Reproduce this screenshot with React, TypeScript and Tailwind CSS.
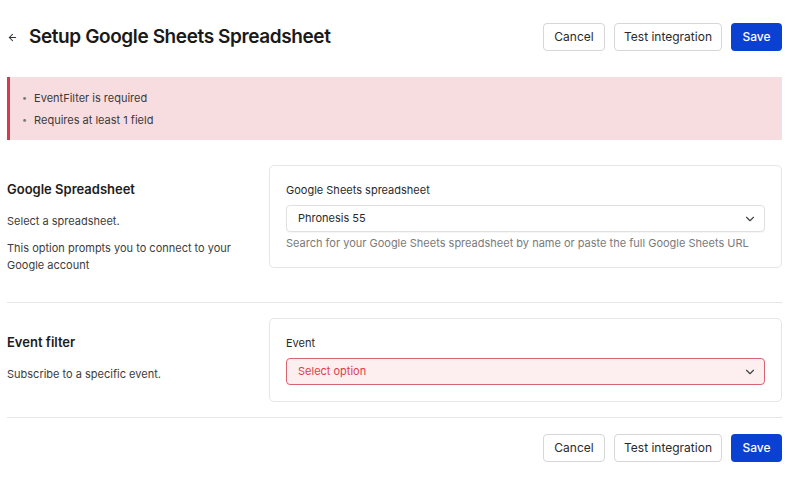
import React from 'react';
import { ArrowLeft, ChevronDown } from 'lucide-react';
import { clsx } from 'clsx';

function Actions() {
  return (
    <div className="flex items-center gap-[9px]">
      <button className="h-[28px] w-[62px] rounded-[4px] border border-[#d6d6d6] bg-white text-[12px] text-[#2a2a2a]">
        Cancel
      </button>
      <button className="h-[28px] w-[108px] rounded-[4px] border border-[#d6d6d6] bg-white text-[12px] text-[#2a2a2a]">
        Test integration
      </button>
      <button className="h-[28px] w-[51px] rounded-[4px] bg-[#0b41d3] text-[12px] font-medium text-white">
        Save
      </button>
    </div>
  );
}

function SelectBox({ value, error }: { value: string; error?: boolean }) {
  return (
    <div
      className={clsx(
        'flex h-[27px] items-center justify-between rounded-[4px] border pl-[11px] pr-[7px] text-[11px]',
        {
          'border-[#e0e0e0] bg-white text-[#2a2a2a] shadow-[0_1px_1px_rgba(0,0,0,0.04)]': !error,
          'border-[#d7646f] bg-[#fdeef0] text-[#de3d4e]': error,
        }
      )}
    >
      <span>{value}</span>
      <ChevronDown size={14} strokeWidth={2} className="text-[#444]" />
    </div>
  );
}

function Section({
  title,
  lines,
  label,
  value,
  helper,
  error,
}: {
  title: string;
  lines: string[];
  label: string;
  value: string;
  helper?: string;
  error?: boolean;
}) {
  return (
    <div className="flex items-start">
      {/* Description */}
      <div className="w-[262px] shrink-0 pr-[26px] pt-[16px]">
        <h2 className="text-[13px] font-semibold leading-[16px] text-[#1c1c1c]">{title}</h2>
        <div className="mt-[16px] flex flex-col gap-[10px] text-[11px] leading-[17px] text-[#3c3c3c]">
          {lines.map((l) => (
            <p key={l}>{l}</p>
          ))}
        </div>
      </div>

      {/* Card */}
      <div
        className={clsx(
          'flex-1 rounded-[5px] border border-[#e6e6e6] px-[16px] pt-[16px]',
          helper ? 'pb-[17px]' : 'pb-[16px]'
        )}
      >
        <div className="text-[11px] leading-[16px] text-[#2a2a2a]">{label}</div>
        <div className="mt-[7px]">
          <SelectBox value={value} error={error} />
        </div>
        {helper && (
          <p className="mt-[4px] text-[11px] leading-[14px] text-[#7a7a7a]">{helper}</p>
        )}
      </div>
    </div>
  );
}

export default function App() {
  return (
    <div
      className="min-h-[482px] w-[807px] bg-white"
      style={{ fontFamily: 'Inter, "Noto Sans", sans-serif' }}
    >
      <div className="ml-[7px] w-[775px] pt-[23px]">
        {/* Header */}
        <div className="flex items-center justify-between">
          <div className="flex items-center gap-[11px]">
            <ArrowLeft size={11} strokeWidth={2.2} className="text-[#333]" />
            <h1 className="text-[19px] font-semibold leading-[28px] tracking-[-0.4px] text-[#1a1a1a]">
              Setup Google Sheets Spreadsheet
            </h1>
          </div>
          <Actions />
        </div>

        {/* Errors */}
        <div className="mt-[26px] h-[63px] border-l-[3px] border-[#d43c4c] bg-[#f8dde0] pl-[12px] pt-[13px]">
          <ul className="flex flex-col gap-[6px] text-[11px] leading-[16px] text-[#3a3a3a]">
            <li className="flex items-center gap-[7px]">
              <span className="text-[9px] text-[#777]">•</span>
              EventFilter is required
            </li>
            <li className="flex items-center gap-[7px]">
              <span className="text-[9px] text-[#777]">•</span>
              Requires at least 1 field
            </li>
          </ul>
        </div>

        <div className="mt-[25px]">
          <Section
            title="Google Spreadsheet"
            lines={['Select a spreadsheet.', 'This option prompts you to connect to your Google account']}
            label="Google Sheets spreadsheet"
            value="Phronesis 55"
            helper="Search for your Google Sheets spreadsheet by name or paste the full Google Sheets URL"
          />
        </div>

        <div className="mb-[15px] mt-[28px] h-px bg-[#e6e6e6]" />

        <Section
          title="Event filter"
          lines={['Subscribe to a specific event.']}
          label="Event"
          value="Select option"
          error
        />

        <div className="mt-[15px] h-px bg-[#e6e6e6]" />

        <div className="flex justify-end pt-[16px]">
          <Actions />
        </div>
      </div>
    </div>
  );
}
